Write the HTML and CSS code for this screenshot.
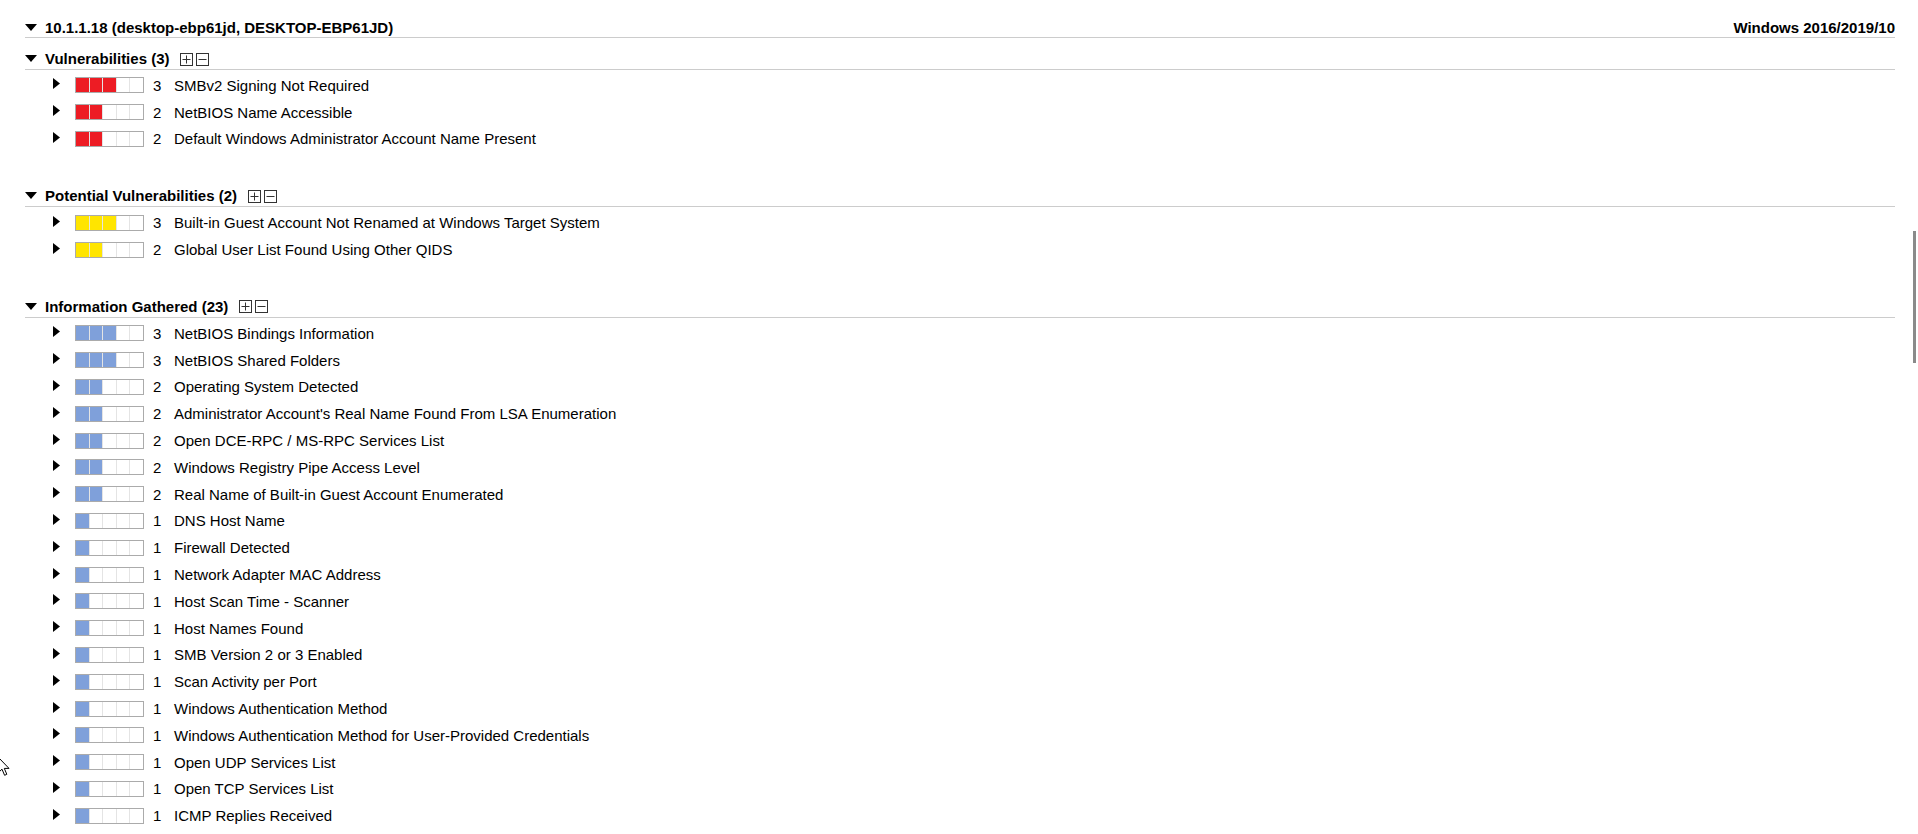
FILE: index.html
```html
<!DOCTYPE html>
<html lang="en">
<head>
<meta charset="utf-8">
<title>Host report</title>
<link rel="stylesheet" href="styles.css">
</head>
<body>
<div class="host">
  <div class="host-head">
    <div class="host-title">
      <svg class="tri-down" width="12" height="7" viewBox="0 0 12 7"><path d="M0 0H12L6 7Z"/></svg>
      <span>10.1.1.18 (desktop-ebp61jd, DESKTOP-EBP61JD)</span>
    </div>
    <div class="host-os">Windows 2016/2019/10</div>
  </div>

  <section class="group">
    <div class="group-head">
      <svg class="tri-down" width="12" height="7" viewBox="0 0 12 7"><path d="M0 0H12L6 7Z"/></svg>
      <span class="group-name">Vulnerabilities (3)</span>
      <span class="toggles">
        <svg width="13" height="13" viewBox="0 0 13 13"><rect x=".5" y=".5" width="12" height="12"/><path d="M2.5 6.5H10.5M6.5 2.5V10.5"/></svg>
        <svg width="13" height="13" viewBox="0 0 13 13"><rect x=".5" y=".5" width="12" height="12"/><path d="M2.5 6.5H10.5"/></svg>
      </span>
    </div>
    <ul class="items">
      <li class="item"><svg class="tri-right" width="7" height="11" viewBox="0 0 7 11"><path d="M0 0L7 5.5L0 11Z"/></svg><span class="sev red"><i class="on"></i><i class="on"></i><i class="on"></i><i></i><i></i></span><span class="num">3</span><span class="name">SMBv2 Signing Not Required</span></li>
      <li class="item"><svg class="tri-right" width="7" height="11" viewBox="0 0 7 11"><path d="M0 0L7 5.5L0 11Z"/></svg><span class="sev red"><i class="on"></i><i class="on"></i><i></i><i></i><i></i></span><span class="num">2</span><span class="name">NetBIOS Name Accessible</span></li>
      <li class="item"><svg class="tri-right" width="7" height="11" viewBox="0 0 7 11"><path d="M0 0L7 5.5L0 11Z"/></svg><span class="sev red"><i class="on"></i><i class="on"></i><i></i><i></i><i></i></span><span class="num">2</span><span class="name">Default Windows Administrator Account Name Present</span></li>
    </ul>
  </section>

  <section class="group">
    <div class="group-head">
      <svg class="tri-down" width="12" height="7" viewBox="0 0 12 7"><path d="M0 0H12L6 7Z"/></svg>
      <span class="group-name">Potential Vulnerabilities (2)</span>
      <span class="toggles">
        <svg width="13" height="13" viewBox="0 0 13 13"><rect x=".5" y=".5" width="12" height="12"/><path d="M2.5 6.5H10.5M6.5 2.5V10.5"/></svg>
        <svg width="13" height="13" viewBox="0 0 13 13"><rect x=".5" y=".5" width="12" height="12"/><path d="M2.5 6.5H10.5"/></svg>
      </span>
    </div>
    <ul class="items">
      <li class="item"><svg class="tri-right" width="7" height="11" viewBox="0 0 7 11"><path d="M0 0L7 5.5L0 11Z"/></svg><span class="sev yellow"><i class="on"></i><i class="on"></i><i class="on"></i><i></i><i></i></span><span class="num">3</span><span class="name">Built-in Guest Account Not Renamed at Windows Target System</span></li>
      <li class="item"><svg class="tri-right" width="7" height="11" viewBox="0 0 7 11"><path d="M0 0L7 5.5L0 11Z"/></svg><span class="sev yellow"><i class="on"></i><i class="on"></i><i></i><i></i><i></i></span><span class="num">2</span><span class="name">Global User List Found Using Other QIDS</span></li>
    </ul>
  </section>

  <section class="group">
    <div class="group-head">
      <svg class="tri-down" width="12" height="7" viewBox="0 0 12 7"><path d="M0 0H12L6 7Z"/></svg>
      <span class="group-name">Information Gathered (23)</span>
      <span class="toggles">
        <svg width="13" height="13" viewBox="0 0 13 13"><rect x=".5" y=".5" width="12" height="12"/><path d="M2.5 6.5H10.5M6.5 2.5V10.5"/></svg>
        <svg width="13" height="13" viewBox="0 0 13 13"><rect x=".5" y=".5" width="12" height="12"/><path d="M2.5 6.5H10.5"/></svg>
      </span>
    </div>
    <ul class="items">
      <li class="item"><svg class="tri-right" width="7" height="11" viewBox="0 0 7 11"><path d="M0 0L7 5.5L0 11Z"/></svg><span class="sev blue"><i class="on"></i><i class="on"></i><i class="on"></i><i></i><i></i></span><span class="num">3</span><span class="name">NetBIOS Bindings Information</span></li>
      <li class="item"><svg class="tri-right" width="7" height="11" viewBox="0 0 7 11"><path d="M0 0L7 5.5L0 11Z"/></svg><span class="sev blue"><i class="on"></i><i class="on"></i><i class="on"></i><i></i><i></i></span><span class="num">3</span><span class="name">NetBIOS Shared Folders</span></li>
      <li class="item"><svg class="tri-right" width="7" height="11" viewBox="0 0 7 11"><path d="M0 0L7 5.5L0 11Z"/></svg><span class="sev blue"><i class="on"></i><i class="on"></i><i></i><i></i><i></i></span><span class="num">2</span><span class="name">Operating System Detected</span></li>
      <li class="item"><svg class="tri-right" width="7" height="11" viewBox="0 0 7 11"><path d="M0 0L7 5.5L0 11Z"/></svg><span class="sev blue"><i class="on"></i><i class="on"></i><i></i><i></i><i></i></span><span class="num">2</span><span class="name">Administrator Account's Real Name Found From LSA Enumeration</span></li>
      <li class="item"><svg class="tri-right" width="7" height="11" viewBox="0 0 7 11"><path d="M0 0L7 5.5L0 11Z"/></svg><span class="sev blue"><i class="on"></i><i class="on"></i><i></i><i></i><i></i></span><span class="num">2</span><span class="name">Open DCE-RPC / MS-RPC Services List</span></li>
      <li class="item"><svg class="tri-right" width="7" height="11" viewBox="0 0 7 11"><path d="M0 0L7 5.5L0 11Z"/></svg><span class="sev blue"><i class="on"></i><i class="on"></i><i></i><i></i><i></i></span><span class="num">2</span><span class="name">Windows Registry Pipe Access Level</span></li>
      <li class="item"><svg class="tri-right" width="7" height="11" viewBox="0 0 7 11"><path d="M0 0L7 5.5L0 11Z"/></svg><span class="sev blue"><i class="on"></i><i class="on"></i><i></i><i></i><i></i></span><span class="num">2</span><span class="name">Real Name of Built-in Guest Account Enumerated</span></li>
      <li class="item"><svg class="tri-right" width="7" height="11" viewBox="0 0 7 11"><path d="M0 0L7 5.5L0 11Z"/></svg><span class="sev blue"><i class="on"></i><i></i><i></i><i></i><i></i></span><span class="num">1</span><span class="name">DNS Host Name</span></li>
      <li class="item"><svg class="tri-right" width="7" height="11" viewBox="0 0 7 11"><path d="M0 0L7 5.5L0 11Z"/></svg><span class="sev blue"><i class="on"></i><i></i><i></i><i></i><i></i></span><span class="num">1</span><span class="name">Firewall Detected</span></li>
      <li class="item"><svg class="tri-right" width="7" height="11" viewBox="0 0 7 11"><path d="M0 0L7 5.5L0 11Z"/></svg><span class="sev blue"><i class="on"></i><i></i><i></i><i></i><i></i></span><span class="num">1</span><span class="name">Network Adapter MAC Address</span></li>
      <li class="item"><svg class="tri-right" width="7" height="11" viewBox="0 0 7 11"><path d="M0 0L7 5.5L0 11Z"/></svg><span class="sev blue"><i class="on"></i><i></i><i></i><i></i><i></i></span><span class="num">1</span><span class="name">Host Scan Time - Scanner</span></li>
      <li class="item"><svg class="tri-right" width="7" height="11" viewBox="0 0 7 11"><path d="M0 0L7 5.5L0 11Z"/></svg><span class="sev blue"><i class="on"></i><i></i><i></i><i></i><i></i></span><span class="num">1</span><span class="name">Host Names Found</span></li>
      <li class="item"><svg class="tri-right" width="7" height="11" viewBox="0 0 7 11"><path d="M0 0L7 5.5L0 11Z"/></svg><span class="sev blue"><i class="on"></i><i></i><i></i><i></i><i></i></span><span class="num">1</span><span class="name">SMB Version 2 or 3 Enabled</span></li>
      <li class="item"><svg class="tri-right" width="7" height="11" viewBox="0 0 7 11"><path d="M0 0L7 5.5L0 11Z"/></svg><span class="sev blue"><i class="on"></i><i></i><i></i><i></i><i></i></span><span class="num">1</span><span class="name">Scan Activity per Port</span></li>
      <li class="item"><svg class="tri-right" width="7" height="11" viewBox="0 0 7 11"><path d="M0 0L7 5.5L0 11Z"/></svg><span class="sev blue"><i class="on"></i><i></i><i></i><i></i><i></i></span><span class="num">1</span><span class="name">Windows Authentication Method</span></li>
      <li class="item"><svg class="tri-right" width="7" height="11" viewBox="0 0 7 11"><path d="M0 0L7 5.5L0 11Z"/></svg><span class="sev blue"><i class="on"></i><i></i><i></i><i></i><i></i></span><span class="num">1</span><span class="name">Windows Authentication Method for User-Provided Credentials</span></li>
      <li class="item"><svg class="tri-right" width="7" height="11" viewBox="0 0 7 11"><path d="M0 0L7 5.5L0 11Z"/></svg><span class="sev blue"><i class="on"></i><i></i><i></i><i></i><i></i></span><span class="num">1</span><span class="name">Open UDP Services List</span></li>
      <li class="item"><svg class="tri-right" width="7" height="11" viewBox="0 0 7 11"><path d="M0 0L7 5.5L0 11Z"/></svg><span class="sev blue"><i class="on"></i><i></i><i></i><i></i><i></i></span><span class="num">1</span><span class="name">Open TCP Services List</span></li>
      <li class="item"><svg class="tri-right" width="7" height="11" viewBox="0 0 7 11"><path d="M0 0L7 5.5L0 11Z"/></svg><span class="sev blue"><i class="on"></i><i></i><i></i><i></i><i></i></span><span class="num">1</span><span class="name">ICMP Replies Received</span></li>
    </ul>
  </section>
</div>

<div class="scroll-thumb"></div>
<svg class="cursor" width="12" height="20" viewBox="0 0 12 20"><path d="M0.5 0.5V15.5L4 12.2L6.6 18.3L8.8 17.3L6.3 11.4H11Z"/></svg>
</body>
</html>
```

FILE: styles.css
```css
html, body {
  margin: 0;
  padding: 0;
  background: #ffffff;
  height: 834px;
  overflow: hidden;
}

body {
  font-family: "Liberation Sans", Arial, sans-serif;
  font-size: 15px;
  color: #000;
}

.host {
  margin: 0 23px 0 25px;
}

.host-head {
  display: flex;
  justify-content: space-between;
  align-items: center;
  padding-top: 17px;
  height: 20px;
  border-bottom: 1px solid #cccccc;
  font-weight: bold;
}

.host-title {
  display: flex;
  align-items: center;
}

.tri-down {
  display: block;
  flex: none;
  margin-right: 8px;
  fill: #000;
}

.group {
  margin-top: 10px;
}

.group + .group {
  margin-top: 33px;
}

.group-head {
  display: flex;
  align-items: center;
  height: 21px;
  border-bottom: 1px solid #cccccc;
  font-weight: bold;
}

.toggles {
  display: flex;
  gap: 3px;
  margin-left: 11px;
  margin-top: 1px;
}

.toggles svg {
  display: block;
}

.toggles rect {
  fill: #fff;
  stroke: #333;
}

.toggles path {
  stroke: #333;
  fill: none;
}

.items {
  list-style: none;
  margin: 0;
  padding: 2px 0 0 0;
}

.item {
  display: flex;
  align-items: center;
  height: 26.8px;
  padding-left: 28px;
}

.tri-right {
  display: block;
  flex: none;
  fill: #000;
  margin-top: -3px;
}

.sev {
  display: grid;
  grid-template-columns: repeat(5, 1fr);
  gap: 1px;
  box-sizing: border-box;
  width: 69px;
  height: 16px;
  margin-left: 15px;
  border: 1px solid #ababab;
  background: #e4e4e4;
}

.sev i {
  display: block;
  background: #ffffff;
}

.sev.red i.on { background: #ed1c24; }
.sev.yellow i.on { background: #ffe500; }
.sev.blue i.on { background: #7fa0da; }

.num {
  width: 21px;
  margin-left: 9px;
  flex: none;
}

.name {
  white-space: nowrap;
}

.scroll-thumb {
  position: fixed;
  left: 1913px;
  top: 231px;
  width: 3px;
  height: 132px;
  background: #8a8a8a;
}

.cursor {
  position: fixed;
  left: -2px;
  top: 757px;
  fill: #fff;
  stroke: #000;
  stroke-width: 1;
}
```
